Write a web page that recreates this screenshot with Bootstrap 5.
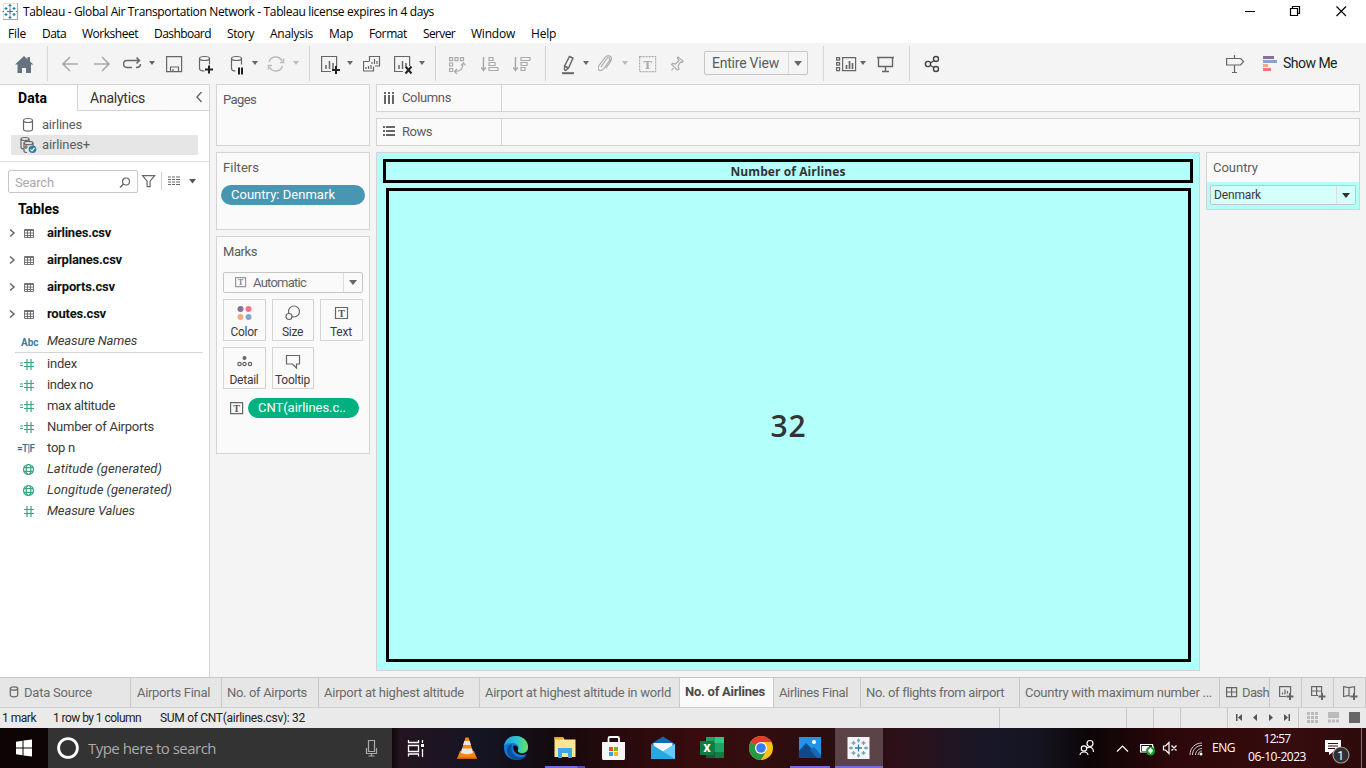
<!DOCTYPE html>
<html lang="en">
<head>
<meta charset="utf-8">
<title>Tableau - Global Air Transportation Network</title>
<meta name="viewport" content="width=device-width, initial-scale=1">
<link href="https://cdn.jsdelivr.net/npm/bootstrap@5.3.0/dist/css/bootstrap.min.css" rel="stylesheet">
<style>
:root{--line:#d4d4d4;--ink:#5c5c5c;--cyan:#b3fffb}
body{width:1366px;height:768px;overflow:hidden;font:13px/20px Roboto,"Liberation Sans",sans-serif;color:var(--ink);background:#f4f4f4}
svg{display:block;flex:none;fill:none;stroke:#666;stroke-width:1.2}
svg text{stroke:none;font-family:Roboto,sans-serif}
.w-seg{font-family:"Open Sans","Noto Sans",sans-serif;color:#000;font-size:12px}
[data-w]{display:inline-block;white-space:nowrap;flex:none}
.title-bar{height:23px}.menu-bar{height:20px;padding-left:8px}
.menu-bar span{line-height:22px}
.tools{height:41px;display:grid;align-items:center;background:#f4f4f4;padding-bottom:1px;
grid-template-columns:15px 32px 15px 32px 29px 26px 17px 32px 32px 22px 15px 26px 16px 12px 26px 16px 30px 26px 16px 14px 32px 32px 32px 16px 22px 15px 24px 17px 32px 33px 119px 13px 24px 17px 32px 15px 302px 37px 20px 1fr}
.vr-line{width:1px;height:35px;background:var(--line)}
.pick{border:1px solid #c6c6c6;border-radius:2px;background:#fafafa}
.tools .pick{width:104px;height:24px;background:#f5f5f5;font-size:14px;padding-left:7px}
.dn{border-left:1px solid #dedede;height:100%;width:19px}
.caret{width:0;height:0;border:4px solid transparent;border-top:5px solid #666;border-bottom:0}
.caret.sm{border-width:3px;border-top-width:4px;border-bottom:0}
.caret.pale{border-top-color:#bbb}
.workspace{height:593px;display:grid;grid-template-columns:210px 160px 990px;}
.data-pane{background:#fff;border-right:1px solid var(--line);border-top:1px solid var(--line)}
.an-tab{background:#fafafa;border-left:1px solid var(--line);border-bottom:1px solid var(--line);width:132px;height:26px;padding:0 6px 0 12px;font-size:14px;color:#333}
.d-tab{width:77px;height:26px;padding-left:18px;font-size:14px;color:#000;font-weight:700}
.src{height:20px;margin:0 11px;padding-left:9px;width:187px}
.src.first{margin-top:4px}.src.picked{background:#e6e6e6}
.finder{border-top:1px solid #e0e0e0;margin-top:6px;padding:8px 0 0 8px}
.finder .pick{width:130px;height:23px;padding:2px 6px 0;color:#aaa}
.tbl-head{padding:6px 0 0 18px;font-size:14px}
.tbl{height:27px;padding-left:9px;color:#111;font-weight:700}
.fld{height:21px;color:#3a3a3a;padding-left:17px}
.fld.names{margin-top:3px}
.fld-rule{border-top:1px solid var(--line);margin:1px 6px 0 15px}
.pane{background:#fafafa;border:1px solid var(--line)}
.shelf-col{padding-left:6px;gap:6px}
.pages{height:62px;padding:5px 6px}.filters{height:78px;padding:5px 4px}.marks{height:218px;padding:5px 6px}
.mark-type{height:21px;margin-top:10px;padding-left:11px;color:#666}
.mark-grid{grid-template-columns:43px 42px 43px;gap:6px;margin-top:6px}
.mark-pill{margin-top:9px;padding-left:7px}
.shelf{height:28px}.shelf-label{width:125px;height:26px;border-right:1px solid var(--line);padding-left:7px}
.pill{height:20px;border-radius:10px;color:#fff;padding-left:10px;font-weight:400}
.pill.dim{background:#4996b2;margin-top:7px}.pill.mea{background:#00b180;width:111px}
.mk{height:42px;color:#3c3c3c;font-size:12px}
.mk span{line-height:14px;margin-left:-1px}
.mk svg{margin-left:-2px}
.view{width:824px;height:519px;background:var(--cyan);border:1px solid var(--line);padding:6px 6px 8px}
.vt{height:24px;border:3px solid #000;color:#333;font:bold 12px/19px "Open Sans",sans-serif}
.vb{height:474px;margin:5px 2px 0 3px;border:3px solid #000;color:#333;font:600 30px/1 "Open Sans",sans-serif;padding-top:2px}
.side{width:154px;height:58px}
.side-head{height:29px;padding:5px 6px}.side-body{background:var(--cyan);height:27px;padding:3px}
.side-body .pick{height:20px;background:#d4fffb;padding-left:3px;color:#3a3a3a;font-size:12px}
.sheets{height:31px;border-top:1px solid #c8c8c8;border-bottom:1px solid #cfcfcf;background:#e6e6e6;display:grid;color:#6a6a6a;grid-template-columns:131px 91px 97px 161px 200px 94px 87px 159px 200px 50px 32px 32px 32px}
.sheets>div{border-right:1px solid #c8c8c8;padding-left:5px;height:29px;overflow:hidden;display:flex;align-items:center;padding-top:1px}
.sheets>.on{background:#fafafa;font-weight:700;color:#4a4a4a;padding-top:0;padding-bottom:1px}
.sheets>.wide{padding-left:8px}
.status{height:20px;background:#eaeaea;color:#222;font-size:12px;display:grid;grid-template-columns:2px 51px 107px 840px 127px 27px 27px 47px 71px 67px;}
.status>*{height:20px}
.status .rl{border-right:1px solid #c8c8c8}
.taskbar{height:40px;background:linear-gradient(90deg,#0c0405 0,#0c0405 390px,#241320 400px,#141524 480px,#140a0d 555px,#280a0c 620px,#380c0e 700px,#2a0d0f 830px,#2d1018 900px,#171728 990px,#151421 1040px,#0c0506 1090px,#2c0709 1170px,#370c0e 1290px,#2c0a0b 1366px)}
.find{width:344px;height:40px;background:#333;color:#aaa;font:15px "Open Sans",sans-serif}
.taskbar svg{stroke:none}
.lang{padding-left:5px;width:38px}
.clock{width:64px;line-height:18px;padding-top:2px}
</style>
</head>
<body>
<header class="bg-white">
 <div class="title-bar d-flex align-items-center">
  <svg width="23" height="23" viewBox="0 0 23 23"><path d="M3.500 19V3.500H17" stroke="#e4e4e4"/><path d="M17.500 3V19.500H3" stroke="#aaa"/><g stroke="#2f7ea6" stroke-width="1.200"><path d="M10 8.500v6M7 11.500h6M10 4v3.500M8.500 5.500h3M10 15.500V19M8.500 17.500h3M4.500 8.500h3M6 7v3M12.500 8.500h3M14 7v3M4.500 14.500h3M6 13v3M12.500 14.500h3M14 13v3M2.500 11.500h1.500M16 11.500h1"/></g></svg>
  <span class="w-seg" data-w="411">Tableau - Global Air Transportation Network - Tableau license expires in 4 days</span>
  <svg class="ms-auto me-3" width="110" height="22" viewBox="1240 0 110 22" stroke-width="1"><g style="stroke:#000"><path d="M1245 10.500h10M1336.500 5.500l9.500 9.500M1346 5.500l-9.500 9.500"/><path d="M1290.500 7.500h7v7h-7zM1292.500 7.500v-2h7v7h-2"/></g></svg>
 </div>
 <nav class="menu-bar d-flex w-seg">
  <span data-w="18" class="me-3">File</span><span data-w="24" class="me-3">Data</span><span data-w="56" class="me-3">Worksheet</span><span data-w="57" class="me-3">Dashboard</span><span data-w="27" class="me-3">Story</span><span data-w="43" class="me-3">Analysis</span><span data-w="24" class="me-3">Map</span><span data-w="38" class="me-3">Format</span><span data-w="32" class="me-3">Server</span><span data-w="44" class="me-3">Window</span><span data-w="25">Help</span>
 </nav>
</header>
<div class="tools">
 <i></i>
 <svg width="20" height="25" viewBox="15 51 20 25"><path d="M15 64.500L24 56l3.500 3.300V57h2.500v4.600l3.500 2.900h-2.500V73h-5v-5h-4v5h-4.500v-8.500z" fill="#66727f" stroke="none"/></svg>
 <div class="vr-line"></div>
 <svg width="18" height="25" viewBox="62 51 18 25" style="stroke:#aaa;stroke-width:1.600"><path d="M78 64H63M70 57l-7 7 7 7"/></svg>
 <svg width="18" height="25" viewBox="94 51 18 25" style="stroke:#aaa;stroke-width:1.600"><path d="M94 64h15M102 57l7 7-7 7"/></svg>
 <svg width="20" height="25" viewBox="123 51 20 25"><path d="M132 67.500h-5c-2 0-3.500-1.500-3.500-3.500s1.500-3.500 3.500-3.500h12M136.500 57.500l3 3-3 3M136 67.500c2.500 0 4.500-1 4.500-3.500" stroke-width="1.500"/></svg>
 <i class="caret sm"></i>
 <svg width="17" height="25" viewBox="166 51 17 25"><path d="M166.600 56.600h15v15h-15zM170.500 71.500v-4.500h8v4.500M173 71.500v-2.500"/></svg>
 <svg width="17" height="25" viewBox="198 51 17 25"><ellipse cx="204.500" cy="58.500" rx="5" ry="2"/><path d="M199.500 58.500v10c0 1.500 2 2.500 5 2.500M209.500 58.500v6"/><path d="M209 65.500v8M205 69.500h8" stroke="#222" stroke-width="2"/></svg>
 <svg width="17" height="25" viewBox="229 51 17 25"><ellipse cx="235.500" cy="58.500" rx="5" ry="2"/><path d="M230.500 58.500v10c0 1.500 1.500 2.500 4 2.500M240.500 58.500v6"/><path d="M238 67.500v7M241 67.500v7" stroke="#222" stroke-width="2"/></svg>
 <i class="caret sm"></i>
 <svg width="18" height="25" viewBox="267 51 18 25" style="stroke:#bbb;stroke-width:1.500"><path d="M269 62a7 7 0 0 1 13-1M282.500 66a7 7 0 0 1-13 1M280 62.500h3.500v-4M272 65.500h-3.500v4"/></svg>
 <i class="caret sm pale"></i>
 <div class="vr-line"></div>
 <svg width="22" height="25" viewBox="321 51 22 25"><path d="M331 71.500h-9.400v-15h15V67" /><path d="M326 69v-4M329.500 69v-8M333 69v-6" stroke-width="1.500"/><path d="M336 66v8M332 70h8" stroke="#222" stroke-width="2"/></svg>
 <i class="caret sm"></i>
 <svg width="19" height="25" viewBox="363 51 19 25"><path d="M369.500 61.500v-5h10v9.500h-4.500M369 61.500h-5.500v9.500h10v-4.500M372 64v-2M374.500 64v-5M377 64v-3M366 69v-2M368.500 69v-3M371 69v-4"/></svg>
 <svg width="22" height="25" viewBox="392 51 22 25"><path d="M402 71.500h-8.400v-15h15V66"/><path d="M398 69v-4M401.500 69v-8M405 66v-3" stroke-width="1.500"/><path d="M404.500 66.500l6 7M410.500 66.500l-6 7" stroke="#222" stroke-width="2"/></svg>
 <i class="caret sm"></i>
 <div class="vr-line"></div>
 <svg width="18" height="25" viewBox="449 51 18 25" style="stroke:#aaa"><path d="M449.600 57.600h3v3h-3zM455 57.600h3v3h-3zM460.500 57.600h3v3h-3zM449.600 63h3v3h-3zM449.600 68.500h3v3h-3zM455 71.500c5 0 8-3 8-8M461 65.500l2.500-2.500 2 2.500M457 69l-2.500 2.500 2.500 2.500"/></svg>
 <svg width="19" height="25" viewBox="481 51 19 25" style="stroke:#aaa"><path d="M483.500 57v13M481.300 67.500l2.200 3 2.200-3" stroke-width="1.500"/><path d="M489 57.500h4v3h-4zM489 62.500h6v3h-6zM489 67.500h9v3h-9z"/></svg>
 <svg width="19" height="25" viewBox="513 51 19 25" style="stroke:#aaa"><path d="M515.500 57v13M513.300 67.500l2.200 3 2.200-3" stroke-width="1.500"/><path d="M521 57.500h9v3h-9zM521 62.500h6v3h-6zM521 67.500h4v3h-4z"/></svg>
 <div class="vr-line"></div>
 <svg width="16" height="25" viewBox="561 51 16 25"><path d="M562 73.200h12" stroke-width="2"/><path d="M569.500 56.500l3.500 1.500-4.500 10-3 2.500-1-.8v-3.500zM564.500 66l4 2" stroke-width="1.400"/></svg>
 <i class="caret sm"></i>
 <svg width="16" height="25" viewBox="598 51 16 25" style="stroke:#aaa"><path d="M601 67l5.500-8c2-2.500 4-.5 3 1.500l-5.500 8c-1.500 2-4 2.500-5 1.500-1.500-1-1-3 0-4.500l6-8c2-2.500 6-2 6.500.5.300 2-1 3.500-2 5l-3.500 5"/></svg>
 <i class="caret sm pale"></i>
 <svg width="18" height="25" viewBox="639 51 18 25" style="stroke:#aaa"><path d="M639.600 56.600h16v15h-16z" stroke-dasharray="2 1"/><text x="647.500" y="69" font-size="13" text-anchor="middle" style="font-family:'Liberation Serif';fill:#aaa;font-weight:bold">T</text></svg>
 <svg width="16" height="25" viewBox="671 51 16 25" style="stroke:#aaa"><path d="M678 57l5 4-1 1.500-1.500-.5-2.500 4 1 3-1.500 1-6-5.500 1-1 3 .5 3.500-3.500-1.500-2zM674.500 66.500l-3 4"/></svg>
 <div class="pick d-flex align-items-center justify-content-between"><span data-w="67">Entire View</span><div class="dn d-flex align-items-center justify-content-center"><i class="caret"></i></div></div>
 <div class="vr-line"></div>
 <svg width="21" height="25" viewBox="836 51 21 25"><path d="M836.600 57.600h3v2.500h-3zM836.600 62.600h3v2.500h-3zM836.600 67.600h3v3h-3zM842.600 57.600h13v13h-13z"/><path d="M846.500 69v-4M849.500 69v-8M852.500 69v-6" stroke-width="1.700"/></svg>
 <i class="caret sm"></i>
 <svg width="18" height="25" viewBox="877 51 18 25"><path d="M877 57.500h17M878.500 57.500v9h14v-9M885.500 66v5.500M882 71.500h7" stroke-width="1.400"/></svg>
 <div class="vr-line"></div>
 <svg width="17" height="25" viewBox="924 51 17 25" style="stroke:#444;stroke-width:1.400"><circle cx="928" cy="64" r="2.600"/><circle cx="936" cy="59" r="2.500"/><circle cx="936" cy="69" r="2.500"/><path d="M930.500 63l3.500-2.500M930.500 65.500l3.500 2"/></svg>
 <svg width="20" height="25" viewBox="1226 51 20 25"><path d="M1226.600 58.500h14l3 3-3 3.500h-14zM1234.500 55v3M1234.500 65v7.500M1232 72.500h5"/></svg>
 <svg width="16" height="25" viewBox="1263 51 16 25" style="stroke:none"><path d="M1263 56h11v3h-11z" fill="#88709a"/><path d="M1263 60h14v3h-14z" fill="#82a6cf"/><path d="M1263 64h5v3h-5z" fill="#f7a981"/><path d="M1263 68h8v3h-8z" fill="#fb7185"/></svg>
 <span class="fs-6 lh-1"><span data-w="54" style="font-size:14px;color:#222">Show Me</span></span>
</div>

<main class="workspace">
 <aside class="data-pane">
  <div class="d-flex"><div class="d-tab d-flex align-items-center"><span data-w="29">Data</span></div><div class="an-tab d-flex align-items-center justify-content-between"><span data-w="55">Analytics</span><svg width="8" height="12" viewBox="0 0 8 12"><path d="M6.500 0L2 5l4.500 5" stroke-width="1.400"/></svg></div></div>
  <div class="src first d-flex align-items-center"><svg width="22" height="18" viewBox="20 116 22 18"><ellipse cx="28" cy="120.500" rx="4.500" ry="2"/><path d="M23.500 120.500v8.500c0 2.800 9 2.800 9 0v-8.500"/></svg><span data-w="40">airlines</span></div>
  <div class="src picked d-flex align-items-center"><svg width="22" height="18" viewBox="20 136 22 18"><ellipse cx="25" cy="139" rx="4" ry="1.500"/><path d="M21 139v8c0 1 1 2 3 2M29 139v2"/><ellipse cx="28.500" cy="143" rx="4.500" ry="1.600"/><path d="M24 143v8c0 1 2 1.500 3 1.500M33 143v3M24 147h4M26 145v4"/><circle cx="32.500" cy="149.300" r="3.800" fill="#2f7fa1" stroke="none"/><path d="M30.500 149.300l1.500 1.500 2.500-3" stroke="#fff"/></svg><span data-w="48">airlines+</span></div>
  <div class="finder d-flex align-items-center">
   <div class="pick bg-white d-flex align-items-center justify-content-between"><span data-w="39">Search</span><svg width="12" height="12" viewBox="0 0 12 12"><circle cx="7" cy="4.500" r="3.500"/><path d="M4.500 7L1 10.500" stroke-width="1.500"/></svg></div>
   <svg width="60" height="20" viewBox="138 172 60 20"><path d="M142.600 175.600h12l-4.500 5.500v5.500h-3v-5.500z"/><path d="M161.500 172v18" stroke="#d4d4d4"/><path d="M168 177h3M172 177h3M176 177h4M168 179.500h3M172 179.500h3M176 179.500h4M168 182h3M172 182h3M176 182h4M168 184.500h3M172 184.500h3M176 184.500h4"/><path d="M189 179h7l-3.500 4.500z" fill="#555" stroke="none"/></svg>
  </div>
  <div class="tbl-head fw-bold text-black"><span data-w="41">Tables</span></div>
  <div class="tbl d-flex align-items-center"><svg width="38" height="12" viewBox="9 0 38 12"><path d="M10 2.500l4 3.500-4 3.500" stroke-width="1.500"/><path d="M24.500 2.500h9v8h-9zM24.500 3.500h9M24.500 6h9M24.500 8.500h9M27.500 3v7.500M30.500 3v7.500" stroke-width=".9"/></svg><span data-w="64">airlines.csv</span></div>
  <div class="tbl d-flex align-items-center"><svg width="38" height="12" viewBox="9 0 38 12"><path d="M10 2.500l4 3.500-4 3.500" stroke-width="1.500"/><path d="M24.500 2.500h9v8h-9zM24.500 3.500h9M24.500 6h9M24.500 8.500h9M27.500 3v7.500M30.500 3v7.500" stroke-width=".9"/></svg><span data-w="75">airplanes.csv</span></div>
  <div class="tbl d-flex align-items-center"><svg width="38" height="12" viewBox="9 0 38 12"><path d="M10 2.500l4 3.500-4 3.500" stroke-width="1.500"/><path d="M24.500 2.500h9v8h-9zM24.500 3.500h9M24.500 6h9M24.500 8.500h9M27.500 3v7.500M30.500 3v7.500" stroke-width=".9"/></svg><span data-w="68">airports.csv</span></div>
  <div class="tbl d-flex align-items-center"><svg width="38" height="12" viewBox="9 0 38 12"><path d="M10 2.500l4 3.500-4 3.500" stroke-width="1.500"/><path d="M24.500 2.500h9v8h-9zM24.500 3.500h9M24.500 6h9M24.500 8.500h9M27.500 3v7.500M30.500 3v7.500" stroke-width=".9"/></svg><span data-w="59">routes.csv</span></div>
  <div class="fld names d-flex align-items-center"><svg width="30" height="14" viewBox="17 0 30 14"><text x="21" y="12" font-size="10" font-weight="700" fill="#3c7c9c">Abc</text></svg><i data-w="90">Measure Names</i></div>
  <div class="fld-rule"></div>
  <div class="fld d-flex align-items-center"><svg width="30" height="14" viewBox="17 0 30 14" style="stroke:#3ba57e"><path d="M20 6h3M20 8.500h3M24 5.500h10M24 9.500h10M27 2v11M31 2v11"/></svg><span data-w="30">index</span></div>
  <div class="fld d-flex align-items-center"><svg width="30" height="14" viewBox="17 0 30 14" style="stroke:#3ba57e"><path d="M20 6h3M20 8.500h3M24 5.500h10M24 9.500h10M27 2v11M31 2v11"/></svg><span data-w="46">index no</span></div>
  <div class="fld d-flex align-items-center"><svg width="30" height="14" viewBox="17 0 30 14" style="stroke:#3ba57e"><path d="M20 6h3M20 8.500h3M24 5.500h10M24 9.500h10M27 2v11M31 2v11"/></svg><span data-w="68">max altitude</span></div>
  <div class="fld d-flex align-items-center"><svg width="30" height="14" viewBox="17 0 30 14" style="stroke:#3ba57e"><path d="M20 6h3M20 8.500h3M24 5.500h10M24 9.500h10M27 2v11M31 2v11"/></svg><span data-w="107">Number of Airports</span></div>
  <div class="fld d-flex align-items-center"><svg width="30" height="14" viewBox="17 0 30 14"><text x="17" y="11" font-size="10" fill="#2f7396" font-weight="500" textLength="18">=T|F</text></svg><span data-w="28">top n</span></div>
  <div class="fld d-flex align-items-center"><svg width="30" height="14" viewBox="17 0 30 14" style="stroke:#3ba57e"><circle cx="28.500" cy="7.500" r="5"/><ellipse cx="28.500" cy="7.500" rx="2.300" ry="5"/><path d="M24 5.700h9M24 9.300h9"/></svg><i data-w="115">Latitude (generated)</i></div>
  <div class="fld d-flex align-items-center"><svg width="30" height="14" viewBox="17 0 30 14" style="stroke:#3ba57e"><circle cx="28.500" cy="7.500" r="5"/><ellipse cx="28.500" cy="7.500" rx="2.300" ry="5"/><path d="M24 5.700h9M24 9.300h9"/></svg><i data-w="125">Longitude (generated)</i></div>
  <div class="fld d-flex align-items-center"><svg width="30" height="14" viewBox="17 0 30 14" style="stroke:#3ba57e"><path d="M24 5.500h10M24 9.500h10M27 2v11M31 2v11"/></svg><i data-w="88">Measure Values</i></div>
 </aside>

 <section class="shelf-col d-flex flex-column">
  <div class="pane pages"><span data-w="33">Pages</span></div>
  <div class="pane filters"><span class="ms-1" data-w="34" style="text-indent:-2px">Filters</span><div class="pill dim d-flex align-items-center"><span data-w="104">Country: Denmark</span></div></div>
  <div class="pane marks"><span data-w="34">Marks</span>
   <div class="pick mark-type d-flex align-items-center"><svg width="18" height="13" viewBox="0 0 18 13"><path d="M.6 1.600h10v9H.6z" stroke="#999"/><text x="5.600" y="9.200" font-size="8" text-anchor="middle" fill="#888" font-weight="bold" style="font-family:'Liberation Serif'">T</text></svg><span data-w="53">Automatic</span><div class="dn ms-auto d-flex align-items-center justify-content-center"><i class="caret"></i></div></div>
   <div class="mark-grid d-grid">
    <div class="mk pane d-flex flex-column align-items-center"><svg width="20" height="25" viewBox="0 0 20 25" style="stroke:none"><circle cx="6.500" cy="9" r="3" fill="#88709a"/><circle cx="14.500" cy="9" r="3" fill="#fb7185"/><circle cx="6.500" cy="17" r="3" fill="#f7a981"/><circle cx="14.500" cy="17" r="3" fill="#82a6cf"/></svg><span data-w="27">Color</span></div>
    <div class="mk pane d-flex flex-column align-items-center"><svg width="20" height="25" viewBox="0 0 20 25"><circle cx="12" cy="11.500" r="5.500"/><circle cx="7" cy="16.500" r="3" fill="#fafafa"/></svg><span data-w="21">Size</span></div>
    <div class="mk pane d-flex flex-column align-items-center"><svg width="20" height="25" viewBox="0 0 20 25"><path d="M4.500 7.500h12v11h-12z"/><text x="10.500" y="16.500" font-size="10" text-anchor="middle" fill="#555" font-weight="bold" style="font-family:'Liberation Serif'">T</text></svg><span data-w="22">Text</span></div>
    <div class="mk pane d-flex flex-column align-items-center"><svg width="20" height="25" viewBox="0 0 20 25"><circle cx="10.500" cy="10" r="2" fill="#666" stroke="none"/><circle cx="5.500" cy="16" r="1.700"/><circle cx="10.500" cy="16" r="1.700"/><circle cx="16" cy="16" r="1.700"/></svg><span data-w="29">Detail</span></div>
    <div class="mk pane d-flex flex-column align-items-center"><svg width="20" height="25" viewBox="0 0 20 25"><path d="M4.500 7.500h13v8.500h-3v4l-4-4h-6z"/></svg><span data-w="35">Tooltip</span></div>
   </div>
   <div class="mark-pill d-flex align-items-center"><svg width="18" height="14" viewBox="0 0 18 14"><path d="M.6 1.600h12v11H.6z"/><text x="6.600" y="10.500" font-size="10" text-anchor="middle" fill="#555" font-weight="bold" style="font-family:'Liberation Serif'">T</text></svg><div class="pill mea d-flex align-items-center"><span data-w="88">CNT(airlines.c..</span></div></div>
  </div>
 </section>

 <section class="ps-2" style="margin-left:-2px">
  <div class="pane shelf"><div class="shelf-label d-flex align-items-center"><svg width="18" height="14" viewBox="0 0 18 14" style="stroke-width:2"><path d="M1 1v2M5 1v2M9 1v2M1 4v9M5 4v9M9 4v9"/></svg><span data-w="49">Columns</span></div></div>
  <div class="pane shelf" style="margin-top:6px"><div class="shelf-label d-flex align-items-center" style="padding-left:6px"><svg width="19" height="14" viewBox="0 0 19 14" style="stroke-width:2"><path d="M0 2h2M0 6h2M0 10h2M3 2h9M3 6h9M3 10h9"/></svg><span data-w="30">Rows</span></div></div>
  <div class="d-flex" style="margin-top:6px;gap:6px">
   <div class="view"><div class="vt d-flex justify-content-center"><span data-w="115">Number of Airlines</span></div><div class="vb d-flex align-items-center justify-content-center"><span data-w="36">32</span></div></div>
   <div class="side pane"><div class="side-head"><span data-w="45">Country</span></div><div class="side-body"><div class="pick d-flex align-items-center"><span data-w="47">Denmark</span><div class="dn ms-auto d-flex align-items-center justify-content-center"><i class="caret" style="border-top-color:#333"></i></div></div></div></div>
  </div>
 </section>
</main>

<nav class="sheets">
 <div><svg width="19" height="16" viewBox="-1 0 19 16"><ellipse cx="8" cy="3.500" rx="3.700" ry="1.700"/><path d="M4.300 3.500v6.500c0 2.500 7.400 2.500 7.400 0V3.500"/></svg><span data-w="68">Data Source</span></div>
 <div class="ps-1"><span data-w="73" style="margin-left:2px">Airports Final</span></div>
 <div><span data-w="80">No. of Airports</span></div>
 <div><span data-w="140">Airport at highest altitude</span></div>
 <div><span data-w="186">Airport at highest altitude in world</span></div>
 <div class="on"><span data-w="80">No. of Airlines</span></div>
 <div><span data-w="69">Airlines Final</span></div>
 <div><span data-w="138">No. of flights from airport</span></div>
 <div><span data-w="187">Country with maximum number ...</span></div>
 <div><svg width="17" height="14" viewBox="-1 0 17 14"><path d="M.6 1.600h10v9H.6zM.6 6h10M5.600 1.600v9"/></svg><span data-w="27">Dash</span></div>
 <div class="wide"><svg width="17" height="18" viewBox="0 0 17 18"><path d="M8 12.500H1.600V2.600h11V9M4.500 10.500v-2M7 10.500v-5M9.500 9.500V7"/><path d="M12 9v7M8.500 12.500h7" stroke-width="2"/></svg></div>
 <div class="wide"><svg width="17" height="18" viewBox="0 0 17 18"><path d="M8 11.500H1.600V2.600h10V9M1.600 7h10M6.600 2.600v9"/><path d="M12 9v7M8.500 12.500h7" stroke-width="2"/></svg></div>
 <div class="wide"><svg width="17" height="18" viewBox="0 0 17 18"><path d="M8 12.500l-1-1-5.400 1V2.600l5.400 1 5.500-1V9M7 3.600v8"/><path d="M12 9v7M8.500 12.500h7" stroke-width="2"/></svg></div>
</nav>
<div class="status">
 <i></i><span><span data-w="34">1 mark</span></span><span><span data-w="88">1 row by 1 column</span></span><span class="rl"><span data-w="145">SUM of CNT(airlines.csv): 32</span></span><i class="rl"></i><i class="rl"></i><i class="rl"></i><i class="rl"></i>
 <div class="rl"><svg width="70" height="20" viewBox="1228 708 70 20" style="stroke:none;fill:#555"><path d="M1236 714h1.500v7h-1.500zM1242 714v7l-4-3.500zM1257 714v7l-4-3.500zM1269 714v7l4-3.500zM1284 714v7l4-3.500zM1288.500 714h1.500v7h-1.500z"/></svg></div>
 <svg width="67" height="20" viewBox="1299 708 67 20" style="stroke:none"><path d="M1307 712h3v3h-3zM1311 712h3v3h-3zM1315 712h3v3h-3zM1307 716h3v3h-3zM1311 716h3v3h-3zM1315 716h3v3h-3zM1307 720h3v3h-3zM1311 720h3v3h-3zM1315 720h3v3h-3zM1328 712h11v6h-11zM1328 719.500h3v3h-3zM1332 719.500h3v3h-3zM1336 719.500h3v3h-3z" fill="#bbb"/><path d="M1349 712h11v11h-11z" fill="#666"/></svg>
</div>
<footer class="taskbar d-flex">
 <svg width="48" height="40" viewBox="0 728 48 40"><path d="M16 741.800l6.500-1v6.700H16zM23.500 740.600l8.500-1.100v8h-8.500zM16 748.500h6.500v6.700l-6.500-1zM23.500 748.500H32v8l-8.500-1.100z" fill="#fff"/></svg>
 <div class="find d-flex align-items-center"><svg width="40" height="40" viewBox="48 728 40 40"><circle cx="68" cy="748" r="9.400" style="stroke:#fff;stroke-width:2.800"/></svg><span data-w="128">Type here to search</span><svg class="ms-auto" width="30" height="40" viewBox="362 728 30 40"><g stroke="#aaa" stroke-width="1.200"><path d="M368.500 740.500h6v11h-6zM366.500 748v5.500h10V748M371.500 753.500v3M368.500 756h6"/></g></svg></div>
 <svg width="50" height="40" viewBox="392 728 50 40"><path d="M408.500 740v2.500h10V740M408.500 745.500h10v6h-10zM408.500 756.500V754h10v2.500M422.500 740v3M422.500 749v8" stroke="#fff" stroke-width="1.300"/><path d="M421 744h3v3h-3z" fill="#fff"/></svg>
 <svg width="49" height="40" viewBox="442 728 49 40"><path d="M460 751h14l3 8h-20z" fill="#f58410"/><path d="M465.500 737.500h3l5 16c-3 2-10 2-13 0z" fill="#f58a18"/><path d="M464.300 741h5.400l1.200 4h-7.800zM462 748.500h10l1 4.500c-3 1.500-9 1.500-12 0z" fill="#e8e8e8"/><path d="M457 757.500h20v1.500h-20z" fill="#ca6108"/></svg>
 <svg width="49" height="40" viewBox="491 728 49 40"><defs><linearGradient id="ed" x1="0" x2="1"><stop offset="0" stop-color="#1e9fe8"/><stop offset=".5" stop-color="#2bc3d2"/><stop offset="1" stop-color="#6be35a"/></linearGradient></defs><circle cx="516" cy="748" r="12" fill="#127cd4"/><path d="M504 746c1-7 6-10 12-10 7 0 12 5 12 11 0 5-5 7-9 6-2-1-2-2-1-3 2-3-1-7-5-7-4-.5-7 1-9 3z" fill="url(#ed)"/><path d="M512 744c-2 6 1 13 9 13 3 0 4-1 6-2-3 4-8 6-13 4.500-6-2-9-9-6-13 1-1.500 2-2.500 4-2.500z" fill="#0c4f9f"/><path d="M513 747c0 4 4 8 9 8 2 0 4-.5 6-2v-3c-2 3-5 4-8 3-2-1-3-2-2-4 1-3-5-5-5-2z" fill="#1c0a0e"/></svg>
 <svg width="49" height="40" viewBox="540 728 49 40"><path d="M554.500 737h8.500l1.500 2.500h11V757h-21z" fill="#ffe594"/><path d="M554.500 737h8l1 2.500h-9z" fill="#e9a922"/><path d="M558 748h14v10h-4v-5h-6v5h-4z" fill="#39a9e5"/><path d="M545 766h32v2h-32z" fill="#6d6fda"/><path d="M577 766h8v2h-8z" fill="#4e4fa8"/></svg>
 <svg width="49" height="40" viewBox="589 728 49 40"><path d="M602 742h23v16.500c0 1-1 1.500-1.500 1.500H604c-1 0-2-.5-2-1.500z" fill="#f6f6f6"/><path d="M608.500 742v-3.500c0-1 .5-1.500 1.500-1.500h7.500c1 0 1.500.5 1.500 1.500v3.500" stroke="#fff" stroke-width="1.800"/><path d="M609 747h4v4h-4z" fill="#f25022"/><path d="M614 747h4v4h-4z" fill="#7fba00"/><path d="M609 752h4v4h-4z" fill="#2aa5ea"/><path d="M614 752h4v4h-4z" fill="#ffb900"/></svg>
 <svg width="49" height="40" viewBox="638 728 49 40"><path d="M651 744l12-7.500 12 7.500v15h-24z" fill="#1469b5"/><path d="M653.500 743h19v9h-19z" fill="#f4f8fb"/><path d="M651 744l12 7.500 12-7.500v15h-24z" fill="#2aa5e6"/><path d="M675 744l-12 7.500 12 7.500z" fill="#63cdf7"/></svg>
 <svg width="49" height="40" viewBox="687 728 49 40"><path d="M706 737h18v21h-18z" fill="#21a366"/><path d="M715 737h9v6h-9z" fill="#33c481"/><path d="M706 743h9v9h-9zM715 752h9v6h-9z" fill="#107c41"/><path d="M706 752h9v6h-9z" fill="#185c37"/><path d="M700 741h14v14h-14z" fill="#107c41"/><text x="707" y="752" font-size="11" font-weight="900" text-anchor="middle" fill="#fff">X</text></svg>
 <svg width="49" height="40" viewBox="736 728 49 40"><circle cx="761" cy="748" r="12" fill="#fbc116"/><path d="M761 748l-10.400-6A12 12 0 0 1 771.400 742H761z" fill="#e33b2e"/><path d="M750.600 742A12 12 0 0 0 761 760l5.200-9-5.200-3z" fill="#269846"/><circle cx="761" cy="748" r="6" fill="#fff"/><circle cx="761" cy="748" r="4.800" fill="#3b7cec"/></svg>
 <svg width="50" height="40" viewBox="785 728 50 40"><path d="M799 737h22v21h-22z" fill="#2095e6"/><path d="M799 751l7-8 15 15h-22z" fill="#0e4a8d"/><path d="M810 750l4-3 7 8v3h-4z" fill="#1769b5"/><circle cx="814" cy="742" r="2" fill="#fff"/><path d="M790 766h40v2h-40z" fill="#6d6fda"/></svg>
 <svg width="48" height="40" viewBox="835 728 48 40"><path d="M835 728h48v40h-48z" fill="#5b4347"/><path d="M835 766h48v2h-48z" fill="#6d6fda"/><path d="M847.500 737h22v22h-22z" fill="#f6f6f6"/><g stroke="#2f7ea6" stroke-width="1.300"><path d="M858.500 744.500v7M855 748h7"/><path d="M858.500 738.500v4M857 740.500h3M858.500 753.500v4M857 755.500h3M849 748h4M851 746.500v3M864 748h4M866 746.500v3M851.500 743h4M853.500 741v4M861.500 743h4M863.500 741v4M851.500 753h4M853.500 751v4M861.500 753h4M863.500 751v4" stroke="#6fa3c0"/></g></svg>
 <svg class="ms-auto" width="131" height="40" viewBox="1076 728 131 40"><g stroke="#fff" stroke-width="1.200"><circle cx="1084" cy="748.500" r="2.700"/><circle cx="1090" cy="743.500" r="3"/><path d="M1080 755c.5-4 7.500-4 8 0M1087 748c3-2 6.500-.500 6.500 4M1117 751.500l5.500-5.500 5.500 5.500" /><path d="M1140.600 744.500h12v7.500h-12zM1153.500 746.500v3.500"/><path d="M1163.500 746h2l3.500-3.500v11l-3.500-3.500h-2zM1171.500 745.500l5 5M1176.500 745.500l-5 5"/></g><path d="M1142 746h7v5h-7z" fill="#fff"/><circle cx="1150.500" cy="751" r="4.500" fill="#159a2e"/><path d="M1150.500 747.500l2.500 3-1 2h-3l-1-2zM1150 752h1v2h-1z" fill="#fff"/><g stroke="#ccc" stroke-width="1"><path d="M1190 755c0-7 5-12 12-12M1192.500 755c0-5.500 4-9.500 9.500-9.500M1195.500 755c0-3.500 3-6.500 6.500-6.500M1198 755c0-2.500 2-4 4-4"/></g><circle cx="1201" cy="754" r="1.500" fill="#fff"/></svg>
 <div class="lang d-flex align-items-center w-seg text-white"><span data-w="23">ENG</span></div>
 <div class="clock w-seg text-white text-center"><div><span data-w="27">12:57</span></div><div><span data-w="58">06-10-2023</span></div></div>
 <svg width="57" height="40" viewBox="1309 728 57 40"><path d="M1325 740h16v12h-8l-4 3v-3h-4z" fill="#fff"/><path d="M1328 743.500h10M1328 746h10M1328 748.500h7" stroke="#311" stroke-width="1"/><circle cx="1341" cy="755" r="8" fill="#352f30" stroke="#999"/><text x="1340.500" y="759.500" font-size="12" text-anchor="middle" fill="#fff">1</text><path d="M1361.500 728v40" stroke="#7b6567"/></svg>
</footer>
<script src="https://cdn.jsdelivr.net/npm/bootstrap@5.3.0/dist/js/bootstrap.bundle.min.js"></script>
<script>
// Track each label so that it takes exactly the width given in data-w.
document.querySelectorAll('[data-w]').forEach(function (el) {
  var w = el.getBoundingClientRect().width;
  el.style.letterSpacing = ((+el.dataset.w - w) / el.textContent.length) + 'px';
});
</script>
</body>
</html>
